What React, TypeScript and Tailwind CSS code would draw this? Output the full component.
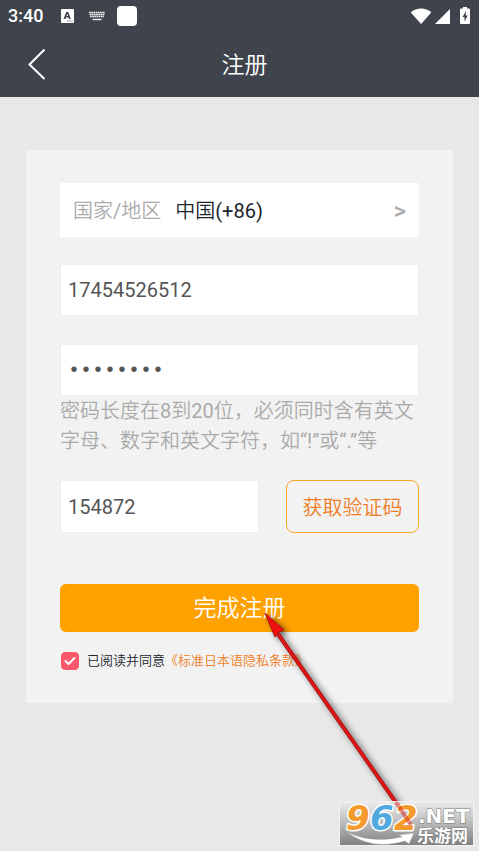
import React, { useState } from "react";

function StatusBar() {
  return (
    <div className="flex h-8 items-center pl-2 pr-2 text-white">
      <span className="text-lg font-medium leading-8">3:40</span>
      <svg className="ml-4 h-4 w-4" viewBox="0 0 16 16" aria-hidden="true">
        <rect x="2" y="1" width="13" height="14" rx="1" fill="#fff" />
        <path d="M4.5 11 L7.2 4 H9.2 L11.9 11 H10 L9.5 9.5 H6.9 L6.4 11 Z M7.4 8.1 H9 L8.2 5.8 Z" fill="#3f444c" fillRule="evenodd" />
        <path d="M8.5 13h1M10.5 13h1M12.5 13h1" stroke="#3f444c" />
      </svg>
      <svg className="ml-3 h-4 w-5" viewBox="0 0 20 16" aria-hidden="true">
        <path d="M2 4.5h16M2.5 6.5h15M3 8.5h14" stroke="#f0f0f0" strokeWidth="1.6" strokeDasharray="1.7 0.5" />
        <path d="M5.5 11.5h9" stroke="#f0f0f0" strokeWidth="1.4" />
      </svg>
      <span className="ml-[10px] h-5 w-5 rounded bg-white" />
      <div className="ml-auto flex items-center gap-1">
        <svg className="h-5 w-5" viewBox="0 0 20 20" aria-hidden="true">
          <path d="M-0.2 6.4C5.5 1.2 15 1.2 20.4 6.4L10.1 18Z" fill="#fff" />
        </svg>
        <svg className="h-5 w-4" viewBox="0 0 16 20" aria-hidden="true">
          <path d="M15 3V18H0Z" fill="#fff" />
        </svg>
        <svg className="ml-1 h-5 w-3" viewBox="0 0 12 20" aria-hidden="true">
          <path d="M4 1h4v1.5h2q1 0 1 1V17q0 1-1 1H2q-1 0-1-1V3.5q0-1 1-1h2z" fill="#fff" />
          <path d="M7 5 3.5 11H5.5V15.5L8.8 9.5H6.7Z" fill="#3f444c" />
        </svg>
      </div>
    </div>
  );
}

function Watermark() {
  return (
    <svg className="absolute right-1 bottom-1 h-[46px] w-[136px] overflow-visible" viewBox="0 0 136 46" role="img" aria-label="962.NET 乐游网">
      <defs>
        <linearGradient id="plate" x1="0" y1="0" x2="0" y2="1">
          <stop offset="0" stopColor="#ededed" stopOpacity="0.85" />
          <stop offset="0.5" stopColor="#b4b4b4" stopOpacity="0.9" />
          <stop offset="1" stopColor="#747474" stopOpacity="0.9" />
        </linearGradient>
      </defs>
      <rect x="0.5" y="0.5" width="134" height="44" fill="url(#plate)" stroke="#f2f2f2" />
      <path d="M8 31Q32 43 63 36L60 34L75 32L70 43L66 40Q32 50 8 31Z" fill="#fff" stroke="#999" strokeWidth="0.4" />
      <g fontFamily="DejaVu Sans, sans-serif" fontWeight="700" fontStyle="italic" fontSize="34" strokeLinejoin="round">
        <g stroke="#fff" strokeWidth="3" paintOrder="stroke">
          <text x="7" y="29" fill="#f59a2c">9</text>
          <text x="31" y="29" fill="#4fa9e0">6</text>
          <text x="55" y="29" fill="#f59a2c">2</text>
        </g>
      </g>
      <path d="M57 1 72 24" stroke="#d92020" strokeWidth="4" opacity="0.45" />
      <g fill="#fff" stroke="#777" strokeWidth="1" paintOrder="stroke" fontWeight="700">
        <text x="79" y="22" fontSize="20" fontFamily="DejaVu Sans, sans-serif">.NET</text>
        <text x="78" y="41" fontSize="17" fontFamily="Noto Sans CJK SC, sans-serif">乐游网</text>
      </g>
    </svg>
  );
}

export default function App() {
  const [phone, setPhone] = useState("17454526512");
  const [password, setPassword] = useState("abc12345");
  const [code, setCode] = useState("154872");
  const [agreed, setAgreed] = useState(true);

  return (
    <div className="relative min-h-screen overflow-hidden bg-[#e8e8e8] font-['Roboto','Noto_Sans_CJK_SC_DemiLight','Noto_Sans_CJK_SC',sans-serif]">
      <header className="bg-[#3f444c] pb-px text-white">
        <StatusBar />
        <div className="grid h-16 grid-cols-[80px_1fr_70px] items-center">
          <button type="button" aria-label="返回" className="flex h-16 items-center pl-7">
            <svg className="h-8 w-5" viewBox="0 0 20 32" fill="none" stroke="#fff" strokeWidth="2" aria-hidden="true">
              <path d="M16.5 1.5 1.5 16.5 16.5 31" />
            </svg>
          </button>
          <h1 className="pt-1 text-center text-[23px] leading-8">注册</h1>
        </div>
      </header>

      <main className="px-[26px] pt-[53px]">
        <form className="bg-[#f2f2f2] px-[34px] pt-[33px] pb-8" onSubmit={(e) => e.preventDefault()}>
          {/* Region */}
          <button type="button" className="flex h-[54px] w-full items-center bg-white px-[13px] pt-0.5 text-xl">
            <span className="text-[#aaa]">国家/地区</span>
            <span className="ml-[14px] text-[#20242c]">中国(+86)</span>
            <span className="ml-auto text-2xl font-medium text-[#aaa]">&gt;</span>
          </button>

          {/* Phone */}
          <input
            type="text"
            aria-label="手机号"
            value={phone}
            onChange={(e) => setPhone(e.target.value)}
            className="mt-[27px] block h-[52px] w-full border border-[#eee] bg-white px-[7px] text-xl text-[#555] outline-none"
          />

          {/* Password */}
          <input
            type="password"
            aria-label="密码"
            aria-describedby="password-hint"
            value={password}
            onChange={(e) => setPassword(e.target.value)}
            className="mt-7 block h-[52px] w-full border border-[#eee] bg-white px-[7px] font-['Liberation_Mono',monospace] text-xl text-[#555] outline-none"
          />
          <p id="password-hint" className="text-xl leading-[30px] text-[#aaa]">
            密码长度在8到20位，必须同时含有英文字母、数字和英文字符，如“!”或“.”等
          </p>

          {/* Verification code */}
          <div className="mt-6 flex gap-[27px]">
            <input
              type="text"
              aria-label="验证码"
              value={code}
              onChange={(e) => setCode(e.target.value)}
              className="h-[53px] w-0 flex-1 border border-[#eee] bg-white px-[7px] text-xl text-[#555] outline-none"
            />
            <button type="button" className="h-[53px] w-[133px] rounded-lg border border-[#f5a52a] pt-0.5 text-xl text-[#ef7d26]">
              获取验证码
            </button>
          </div>

          <button type="submit" className="mt-[51px] h-12 w-full rounded-md bg-[#ffa200] pt-0.5 text-[23px] text-white">
            完成注册
          </button>

          {/* Agreement */}
          <div className="mt-[19px] flex items-center text-[13px] leading-5">
            <span className="relative mr-[7px] h-5 w-5">
              <input
                id="agree"
                type="checkbox"
                checked={agreed}
                onChange={(e) => setAgreed(e.target.checked)}
                className="peer m-px block h-[18px] w-[18px] appearance-none rounded border border-[#fb596b] checked:bg-[#fb596b]"
              />
              <svg className="pointer-events-none absolute inset-0 hidden h-5 w-5 peer-checked:block" viewBox="0 0 20 20" fill="none" stroke="#fff" strokeWidth="2" strokeLinecap="round" strokeLinejoin="round" aria-hidden="true">
                <path d="M5.5 10 8.5 13 14.5 7" />
              </svg>
            </span>
            <label htmlFor="agree" className="text-[#20242c]">已阅读并同意</label>
            <a href="#" className="text-[#ef7d26]">《标准日本语隐私条款》</a>
          </div>
        </form>
      </main>

      {/* Pointer to the submit button */}
      <svg className="pointer-events-none absolute top-[605px] right-[60px] h-[226px] w-[160px] drop-shadow-[3px_2px_3px_rgba(0,0,0,0.6)]" viewBox="0 0 160 226" aria-hidden="true">
        <path d="M19 29 152 219" stroke="#a41212" strokeWidth="4" />
        <path d="M19 29 152 219" stroke="#e01515" strokeWidth="2.5" />
        <path d="M6 8 25 25 20 27 16 32Z" fill="#f01010" stroke="#b01212" strokeWidth="1" />
      </svg>
      <Watermark />
    </div>
  );
}
